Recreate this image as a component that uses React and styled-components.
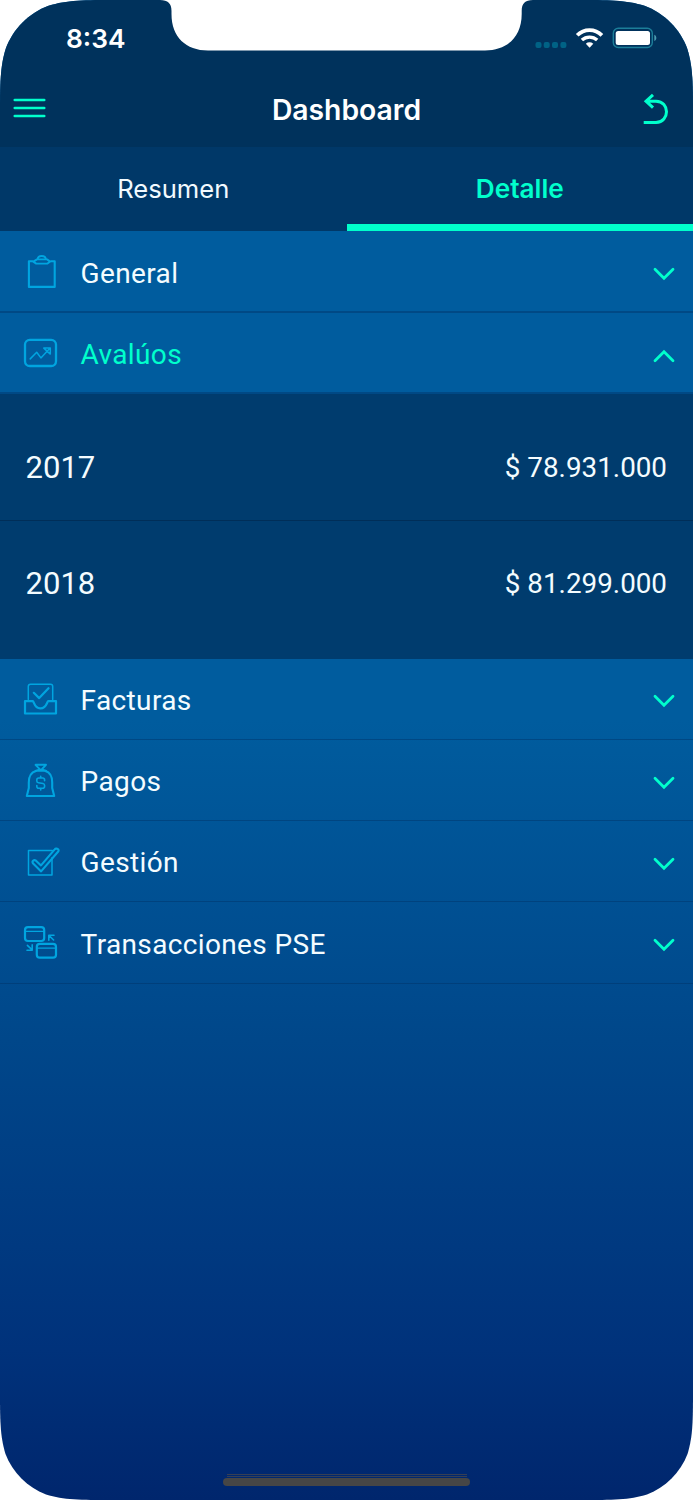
import React from "react";
import styled, { createGlobalStyle } from "styled-components";

const sections = [
  { name: "General", icon: "clipboard", border: "2px", height: "82px" },
  {
    name: "Avalúos",
    icon: "chart",
    border: "2px",
    height: "81px",
    open: true,
    items: [
      { year: "2017", value: "$ 78.931.000" },
      { year: "2018", value: "$ 81.299.000" },
    ],
  },
  { name: "Facturas", icon: "inbox" },
  { name: "Pagos", icon: "bag" },
  { name: "Gestión", icon: "check" },
  { name: "Transacciones PSE", icon: "cards" },
];

// every icon is drawn in a 40x40 box
const icons = {
  clipboard: (
    <g transform="translate(0 .5)">
      <path d="M12.5 6.7H8.9V32.4H34.7V6.7H31.2" strokeWidth="2.1" />
      <path d="M17 4.9H27L30.2 7.1L27.5 9.1H16.2L13.3 7.1L17 4.9" strokeWidth="1.9" />
      <path d="M17.7 4.6C18 .4 25.4 .4 25.8 4.6" strokeWidth="1.9" />
    </g>
  ),
  chart: (
    <g transform="translate(0 -2.2)">
      <rect x="5" y="6" width="31" height="26.2" rx="4.8" strokeWidth="2.3" />
      <path d="M10.2 25.1L16.7 18.5L20.9 24.1L29.6 14.6M23.8 14.3L30.3 14.1V20.3Z" strokeWidth="1.5" />
    </g>
  ),
  inbox: (
    <g transform="translate(0 .5)">
      <path d="M8.3 18V5Q8.3 2.8 10.5 2.8H30.5Q32.7 2.8 32.7 5V18" strokeWidth="1.5" />
      <path d="M13.8 11.3L19.2 16.6L28.5 6.7" strokeWidth="2.2" />
      <path d="M5 19.7H12.8C14.2 19.7 13.9 26.9 20.4 26.9C27 26.9 26.8 19.7 28.3 19.7H36V32H5Z" strokeWidth="2.2" />
    </g>
  ),
  bag: (
    <>
      <path d="M15.5 2.8H26L21.7 7.3L26.2 8.9H15.6L20 7.3Z" strokeWidth="1.9" />
      <path d="M16 8.9C10.4 10.4 8.8 15.2 8.8 20.5V26L6.8 34H34.2L32.2 26V20.5C32.2 15.2 30.6 10.4 25.3 8.9" strokeWidth="2.1" />
      <path d="M20.7 14.2V16M20.7 26.4V28M24.6 18.8V18Q24.6 16 22.6 16H18.8Q16.8 16 16.8 18V19Q16.8 20.5 18.5 20.8L22.9 21.5Q24.6 21.8 24.6 23.4V24.3Q24.6 26.3 22.6 26.3H18.8Q16.8 26.3 16.8 24.3V23.6" strokeWidth="1.6" />
    </>
  ),
  check: (
    <g transform="translate(0 -.8)">
      <path d="M32 14.5V31.9H8.5V7.4H32.3" strokeWidth="1.5" />
      <path d="M36.3 5.4C38.2 5.2 39.3 7.2 38 8.6L21.1 28.2L12.9 20C11.6 17.5 14 16.2 16 17.5L21 22.2L34.7 6.2Q35.4 5.3 36.3 5.4Z" strokeWidth="2.1" />
    </g>
  ),
  cards: (
    <g transform="translate(0 -.8)">
      <rect x="5" y="3" width="19.2" height="13.8" rx="3" strokeWidth="2.2" />
      <path d="M5 7.2H24.2" strokeWidth="1.3" />
      <rect x="16.8" y="19.7" width="19.2" height="13.8" rx="3" strokeWidth="2.2" />
      <path d="M16.8 23.9H36" strokeWidth="1.3" />
      <path d="M33.6 15.8L29.1 11.3M28.8 16V11H34M7.4 21.2L11.9 25.5M12.2 20.7V26H7" strokeWidth="1.6" />
    </g>
  ),
};

const App = () => {
  return (
    <>
      <GlobalStyle />
      <Phone>
        <Header>
          <StatusBar>
            <Time>8:34</Time>
            <Notch viewBox="0 0 373 51">
              <path d="M0 0C8 0 11.5 3.5 11.5 11V14C11.5 37 26 50.5 48 50.5H325C347 50.5 361.7 37 361.7 14V11C361.7 3.5 365 0 373 0Z" fill="#fff" />
            </Notch>
            <StatusIcons viewBox="0 0 124 24">
              <g fill="#006285">
                <rect x="0.5" y="14" width="6" height="6" rx="2" />
                <rect x="8.7" y="14" width="6" height="6" rx="2" />
                <rect x="17" y="14" width="6" height="6" rx="2" />
                <rect x="25.4" y="14" width="6" height="6" rx="2" />
              </g>
              <g fill="none" stroke="#fff" strokeWidth="3.8">
                <path d="M42.2 7.3C49 .3 60 .3 66.9 7.3" />
                <path d="M46.9 12.1C51.2 8.1 57.9 8.1 62.2 12.1" strokeWidth="3.4" />
              </g>
              <path d="M50.8 15.7C53 13.9 56 13.9 58.3 15.7L54.6 19.7Z" fill="#fff" />
              <rect x="78.3" y="0.2" width="39" height="19.3" rx="5" fill="none" stroke="#1c7e99" strokeWidth="1.4" />
              <rect x="80.7" y="3" width="34.3" height="14" rx="2.5" fill="#fff" />
              <path d="M119.3 6.7C122 7.7 122 12 119.3 13Z" fill="#4c9bb0" />
            </StatusIcons>
          </StatusBar>
          <NavBar>
            <NavIcon viewBox="0 0 34 40" $width="34px">
              <path d="M2.8 10H32.2M2.8 18H32.2M2.8 26H32.2" strokeLinecap="round" />
            </NavIcon>
            <Title>Dashboard</Title>
            <NavIcon viewBox="0 0 28 40" $width="28px">
              <path d="M2.7 32.6H15C29 32 29 11.5 15 11.2H5.5M12 4.8L5 11.2L12 17.7" strokeWidth="3" />
            </NavIcon>
          </NavBar>
        </Header>
        <Tabs>
          <Tab>Resumen</Tab>
          <Tab $active>Detalle</Tab>
        </Tabs>
        <List>
          {sections.map((section) => (
            <React.Fragment key={section.name}>
              <Row $border={section.border} $height={section.height}>
                <RowIcon viewBox="0 0 40 40">{icons[section.icon]}</RowIcon>
                <RowName $active={section.open}>{section.name}</RowName>
                <Chevron viewBox="0 0 24 16" $open={section.open}>
                  <path d="M3 3.2L12 12.2L21 3.2" />
                </Chevron>
              </Row>
              {section.open && (
                <Panel>
                  {section.items.map((item) => (
                    <PanelRow key={item.year}>
                      <Year>{item.year}</Year>
                      <Value>{item.value}</Value>
                    </PanelRow>
                  ))}
                </Panel>
              )}
            </React.Fragment>
          ))}
        </List>
        <HomeIndicator>
          <HomeShadow />
          <HomeShadow />
          <HomeBar />
        </HomeIndicator>
      </Phone>
    </>
  );
};

const GlobalStyle = createGlobalStyle`
  * {
    box-sizing: border-box;
  }
  body {
    margin: 0;
    background: #fff;
  }
`;

const Phone = styled.div`
  display: flex;
  flex-direction: column;
  width: 693px;
  height: 1500px;
  background: linear-gradient(
    #005c9e 0,
    #005c9e 720px,
    #00478a 1040px,
    #00327b 1350px,
    #00266d 1500px
  );
  clip-path: path(
    "M118 0H575C609 0 626 0 644.5 5.8C664 13 680 29 687.2 48.5C693 67 693 84 693 118V1388C693 1420 693 1436 687.5 1454C680.6 1472.400 665.400 1487.600 647 1494.500C629 1500 613 1500 581 1500H112C80 1500 64 1500 46 1494.500C27.600 1487.600 12.400 1472.400 5.500 1454C0 1436 0 1420 0 1388V118C0 84 0 67 5.800 48.500C13 29 29 13 48.500 5.800C67 0 84 0 118 0Z"
  );
`;
const Header = styled.div`
  height: 147px;
  background: #00325c;
`;
const StatusBar = styled.div`
  display: flex;
  height: 72px;
`;
const Time = styled.div`
  width: 160px;
  padding: 23px 0 0 66px;
  color: #fff;
  font: 600 26.3px/32px Inter, sans-serif;
`;
const Notch = styled.svg`
  width: 373px;
  height: 51px;
`;
const StatusIcons = styled.svg`
  width: 124px;
  height: 24px;
  margin: 28px 0 0 2px;
  overflow: visible;
`;
const NavBar = styled.div`
  display: flex;
  align-items: center;
  justify-content: space-between;
  height: 75px;
  padding: 0 24px 0 12px;
`;
const NavIcon = styled.svg`
  width: ${(props) => props.$width};
  height: 40px;
  fill: none;
  stroke: #00ffcc;
  stroke-width: 2.7;
`;
const Title = styled.div`
  padding: 1px 0 0 6px;
  color: #fff;
  font: 600 28.3px/36px Inter, sans-serif;
`;
const Tabs = styled.div`
  display: flex;
  height: 84px;
  background: #003868;
`;
const Tab = styled.div`
  flex: 1;
  border-bottom: 7px solid ${(props) => (props.$active ? "#00ffcc" : "transparent")};
  color: ${(props) => (props.$active ? "#00ffcc" : "#f2faff")};
  font: ${(props) => (props.$active ? "600 26.2px" : "400 25.6px")}/84px Inter, sans-serif;
  text-align: center;
`;
const List = styled.div`
  flex: 1;
`;
const Row = styled.div`
  display: flex;
  align-items: center;
  height: ${(props) => props.$height || "81.25px"};
  padding: 0 17px 0 20px;
  box-shadow: inset 0 -${(props) => props.$border || "1px"} rgba(0, 45, 95, 0.4);
`;
const RowIcon = styled.svg`
  width: 40px;
  height: 40px;
  margin-top: 4px;
  fill: none;
  stroke: #00a5e0;
  stroke-linecap: round;
  stroke-linejoin: round;
`;
const RowName = styled.div`
  flex: 1;
  padding: 3.5px 0 0 20.6px;
  color: ${(props) => (props.$active ? "#00ffcc" : "#f4fcff")};
  font: 400 28px/36px Roboto, sans-serif;
  letter-spacing: 0.36px;
`;
const Chevron = styled.svg`
  width: 24px;
  height: 16px;
  margin-top: 4.5px;
  fill: none;
  stroke: #00ffcc;
  stroke-width: 2.8;
  stroke-linecap: round;
  transform: ${(props) => (props.$open ? "rotate(180deg)" : "none")};
`;
const Panel = styled.div`
  height: 264.5px;
  padding-top: 10.5px;
  background: #003c6e;
`;
const PanelRow = styled.div`
  display: flex;
  align-items: center;
  justify-content: space-between;
  height: 116px;
  padding: 9px 26px 0 25.6px;
  color: #f4fcff;
  font-family: Roboto, sans-serif;

  &:first-child {
    padding-top: 11px;
    border-bottom: 1px solid #002e58;
  }
`;
const Year = styled.div`
  font-size: 31px;
`;
const Value = styled.div`
  font-size: 27.8px;
`;
const HomeIndicator = styled.div`
  display: flex;
  flex-direction: column;
  align-items: center;
  height: 26px;
`;
const HomeShadow = styled.div`
  width: 240px;
  height: 1px;
  margin-bottom: 1px;
  background: #363f54;
`;
const HomeBar = styled.div`
  width: 247px;
  height: 8px;
  border-radius: 4px;
  background: #464646;
`;

export default App;
